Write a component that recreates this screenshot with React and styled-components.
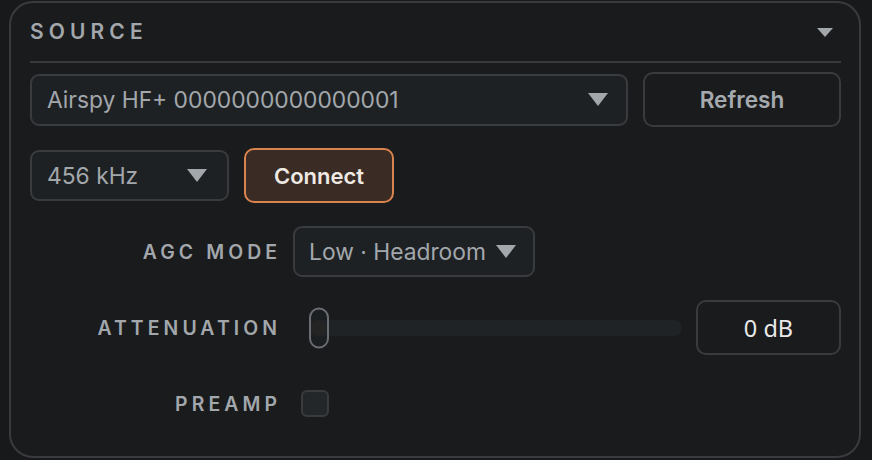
import React from "react";
import styled, { createGlobalStyle } from "styled-components";

const Global = createGlobalStyle`
  html, body { margin: 0; padding: 0; background: #18191b; }
  body { font-family: Inter, "Noto Sans", sans-serif; -webkit-font-smoothing: antialiased; }
  * { box-sizing: border-box; }
`;

const Page = styled.div`
  padding: 1px 11px 0 9px;
  height: 460px;
  overflow: hidden;
`;

const Panel = styled.section`
  width: 852px;
  height: 457px;
  border: 2px solid #3a3b3e;
  border-radius: 24px;
  background: #1a1b1d;
  padding: 0 18px 0 19px;
  display: flex;
  flex-direction: column;
`;

const Header = styled.div`
  height: 60px;
  display: flex;
  align-items: center;
  justify-content: space-between;
  padding-right: 8px;
  border-bottom: 2px solid #37393b;
`;

const Title = styled.h2`
  margin: 0;
  margin-top: -1px;
  font-size: 21px;
  font-weight: 600;
  letter-spacing: 5.1px;
  color: #a2a7ac;
`;

const Caret = styled.span`
  display: inline-block;
  width: 0;
  height: 0;
  border-left: ${(p) => p.$w / 2}px solid transparent;
  border-right: ${(p) => p.$w / 2}px solid transparent;
  border-top: ${(p) => p.$h}px solid #a2a7ac;
  flex: none;
`;

const Body = styled.div`
  padding-top: 9px;
  display: flex;
  flex-direction: column;
  gap: 21px;
`;

const Row = styled.div`
  height: 55px;
  display: flex;
  align-items: center;
  gap: 15px;
`;

const Select = styled.div`
  height: ${(p) => p.$h || 52}px;
  width: ${(p) => (p.$width ? `${p.$width}px` : "auto")};
  flex: ${(p) => (p.$grow ? "1" : "none")};
  display: ${(p) => (p.$inline ? "inline-flex" : "flex")};
  align-items: center;
  justify-content: space-between;
  gap: 10px;
  padding: 0 ${(p) => p.$pr || 19}px 0 ${(p) => p.$pl || 15}px;
  background: #1e2123;
  border: 2px solid #393b3e;
  border-radius: 9px;
  color: #a2a7ac;
  font-size: 22.8px;
  white-space: nowrap;
`;

const Button = styled.button`
  height: 55px;
  width: ${(p) => p.$width}px;
  flex: none;
  border-radius: 10px;
  font-family: inherit;
  font-size: ${(p) => (p.$primary ? 22 : 22.6)}px;
  font-weight: 600;
  cursor: pointer;
  border: 2px solid ${(p) => (p.$primary ? "#d9834f" : "#393b3e")};
  background: ${(p) => (p.$primary ? "#3a2b24" : "#1a1b1d")};
  color: ${(p) => (p.$primary ? "#efe9e4" : "#a5aaaf")};
`;

const Field = styled.div`
  height: 55px;
  display: grid;
  grid-template-columns: 247px 1fr;
  column-gap: 16px;
  align-items: center;
`;

const Label = styled.span`
  text-align: right;
  font-size: 19.4px;
  font-weight: 600;
  letter-spacing: 4.1px;
  margin-right: -4.1px;
  color: #a2a7ac;
`;

const SliderRow = styled.div`
  display: flex;
  align-items: center;
  gap: 14px;
  padding-left: 16px;
`;

const Track = styled.div`
  position: relative;
  flex: 1;
  height: 16px;
  border-radius: 8px;
  background: #1f2326;
`;

const Fill = styled.div`
  position: absolute;
  left: 2px;
  top: 0;
  height: 16px;
  width: 16px;
  border-radius: 8px;
  background: #2c2622;
`;

const Thumb = styled.div`
  position: absolute;
  left: 0;
  top: 50%;
  transform: translateY(-50%);
  width: 20px;
  height: 41px;
  border-radius: 10px;
  border: 2px solid #6a6d71;
  background: rgba(31, 35, 38, 0.55);
`;

const ValueBox = styled.div`
  width: 145px;
  height: 55px;
  flex: none;
  display: flex;
  align-items: center;
  justify-content: center;
  border: 2px solid #393b3e;
  border-radius: 10px;
  color: #e9e9e9;
  font-family: "Noto Sans", sans-serif;
  font-size: 23.5px;
`;

const Checkbox = styled.div`
  width: 28px;
  height: 27px;
  margin-left: 8px;
  border-radius: 6px;
  background: #24272a;
  border: 2px solid #393c3f;
`;

export default function App() {
  return (
    <Page>
      <Global />
      <Panel>
        <Header>
          <Title>SOURCE</Title>
          <Caret $w={16} $h={9} />
        </Header>
        <Body>
          <Row>
            <Select $grow $pr={18}>
              <span>Airspy HF+ 0000000000000001</span>
              <Caret $w={20} $h={13} />
            </Select>
            <Button $width={198}>Refresh</Button>
          </Row>
          <Row>
            <Select $width={199} $h={51} $pr={20}>
              <span>456 kHz</span>
              <Caret $w={20} $h={13} />
            </Select>
            <Button $primary $width={150}>Connect</Button>
          </Row>
          <Field>
            <Label>AGC MODE</Label>
            <div>
              <Select $inline $h={51} $pl={14} $pr={17}>
                <span>Low · Headroom</span>
                <Caret $w={20} $h={13} />
              </Select>
            </div>
          </Field>
          <Field>
            <Label>ATTENUATION</Label>
            <SliderRow>
              <Track>
                <Fill />
                <Thumb />
              </Track>
              <ValueBox>0 dB</ValueBox>
            </SliderRow>
          </Field>
          <Field>
            <Label>PREAMP</Label>
            <div>
              <Checkbox />
            </div>
          </Field>
        </Body>
      </Panel>
    </Page>
  );
}
